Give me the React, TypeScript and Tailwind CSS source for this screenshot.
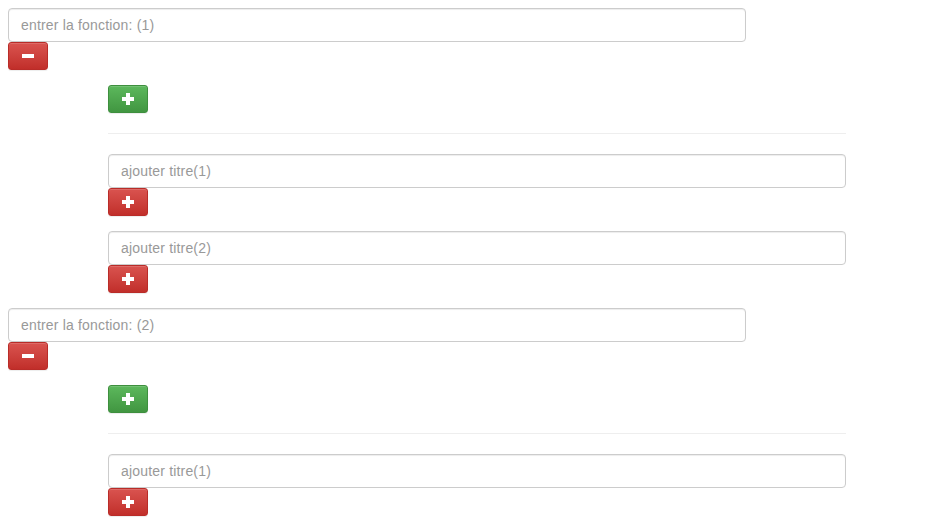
import React from "react";

const inputCls =
  "block w-full h-[34px] px-3 py-1.5 text-[14px] tracking-[0.18px] text-[#555] bg-white border border-[#ccc] rounded-[4px] shadow-[inset_0_1px_1px_rgba(0,0,0,0.075)] placeholder:text-[#999] outline-none";

const PlusIcon = () => (
  <svg width="12" height="12" viewBox="0 0 12 12" className="block">
    <path d="M4 0h4v4h4v4H8v4H4V8H0V4h4z" fill="#fff" />
  </svg>
);

const MinusIcon = () => (
  <svg width="12" height="4" viewBox="0 0 12 4" className="block">
    <rect width="12" height="4" fill="#fff" />
  </svg>
);

const RedButton: React.FC<{ children: React.ReactNode }> = ({ children }) => (
  <button className="flex items-center justify-center w-10 h-7 rounded-[3px] border border-[#b92c28] bg-gradient-to-b from-[#d9534f] to-[#c12e2a] shadow-[inset_0_1px_0_rgba(255,255,255,0.15),0_1px_1px_rgba(0,0,0,0.075)]">
    {children}
  </button>
);

const GreenButton = () => (
  <button className="flex items-center justify-center w-10 h-7 rounded-[3px] border border-[#3e8f3e] bg-gradient-to-b from-[#5cb85c] to-[#419641] shadow-[inset_0_1px_0_rgba(255,255,255,0.15),0_1px_1px_rgba(0,0,0,0.075)]">
    <PlusIcon />
  </button>
);

type Fonction = { id: number; titres: number[] };

const fonctions: Fonction[] = [
  { id: 1, titres: [1, 2] },
  { id: 2, titres: [1] },
];

export default function App() {
  return (
    <div className="p-2 bg-white min-h-screen font-['Liberation_Sans',Arial,sans-serif]">
      {fonctions.map((f) => (
        <div key={f.id} className="mb-[15px]">
          <div className="w-[738px]">
            <input className={inputCls} placeholder={`entrer la fonction: (${f.id})`} />
          </div>
          <RedButton>
            <MinusIcon />
          </RedButton>
          <div className="ml-[100px] w-[738px] mt-[15px]">
            <GreenButton />
            <hr className="mt-5 mb-5 border-0 border-t border-[#eee]" />
            <div className="flex flex-col gap-[15px]">
              {f.titres.map((t) => (
                <div key={t}>
                  <input className={inputCls} placeholder={`ajouter titre(${t})`} />
                  <RedButton>
                    <PlusIcon />
                  </RedButton>
                </div>
              ))}
            </div>
          </div>
        </div>
      ))}
    </div>
  );
}
